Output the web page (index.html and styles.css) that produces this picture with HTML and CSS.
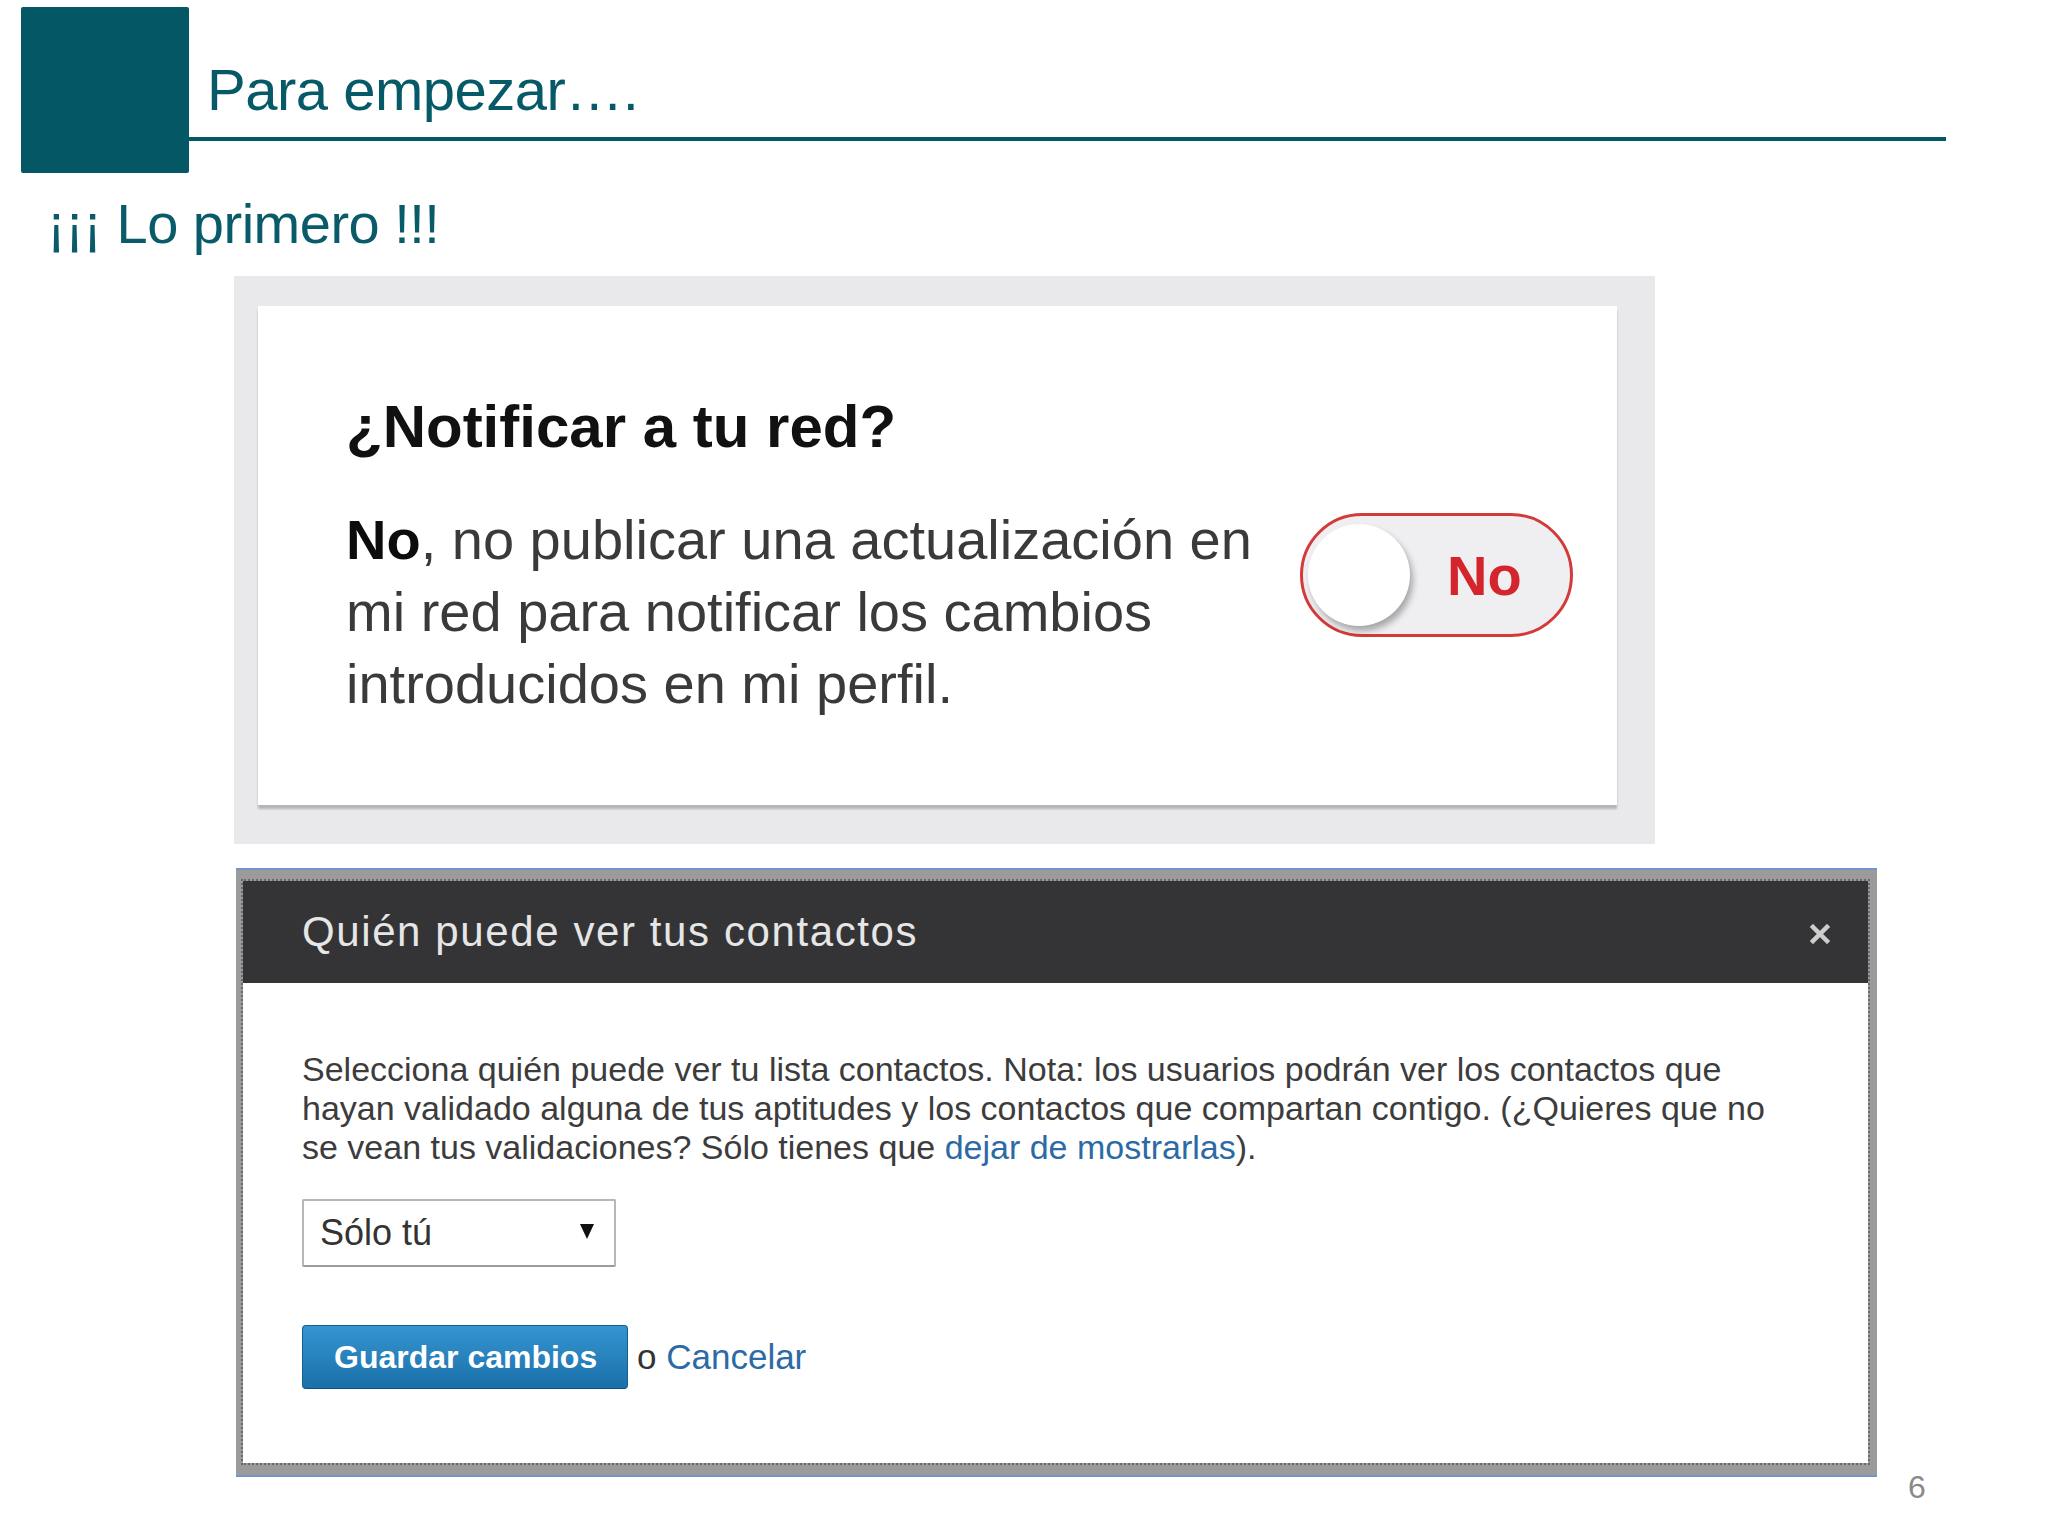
FILE: index.html
```html
<!DOCTYPE html>
<html lang="es">
<head>
    <meta charset="UTF-8">
    <meta name="viewport" content="width=device-width, initial-scale=1.0">
    <title>Para empezar</title>
    <link rel="stylesheet" href="styles.css">
</head>
<body>
    <div class="slide">
        <header class="slide-head">
            <div class="head-square"></div>
            <h1 class="head-title">Para empezar….</h1>
        </header>

        <h2 class="subtitle">¡¡¡ Lo primero !!!</h2>

        <!-- captura 1: notificar a tu red -->
        <div class="shot">
            <div class="notify-card">
                <h3 class="notify-title">¿Notificar a tu red?</h3>
                <div class="notify-row">
                    <p class="notify-text"><strong>No</strong>, no publicar una actualización en mi red para notificar los cambios introducidos en mi perfil.</p>
                    <div class="toggle">
                        <span class="toggle-knob"></span>
                        <span class="toggle-label">No</span>
                    </div>
                </div>
            </div>
        </div>

        <!-- captura 2: quién puede ver tus contactos -->
        <div class="dialog-row">
            <div class="dialog-frame">
                <div class="dialog">
                    <div class="dialog-head">
                        <span class="dialog-title">Quién puede ver tus contactos</span>
                        <svg class="dialog-close" width="20" height="20" viewBox="0 0 20 20">
                            <path d="M3 3 L17 17 M17 3 L3 17" stroke="#cdcdcd" stroke-width="4.5" stroke-linecap="square"/>
                        </svg>
                    </div>
                    <div class="dialog-body">
                        <p class="dialog-text">Selecciona quién puede ver tu lista contactos. Nota: los usuarios podrán ver los contactos que hayan validado alguna de tus aptitudes y los contactos que compartan contigo. (¿Quieres que no se vean tus validaciones? Sólo tienes que <a href="#" class="link">dejar de mostrarlas</a>).</p>
                        <div class="select">
                            <span>Sólo tú</span>
                            <span class="select-arrow"></span>
                        </div>
                        <div class="actions">
                            <button class="btn-primary">Guardar cambios</button>
                            <span class="actions-alt">o <a href="#" class="link">Cancelar</a></span>
                        </div>
                    </div>
                </div>
            </div>
            <span class="page-num">6</span>
        </div>
    </div>
</body>
</html>
```

FILE: styles.css
```css
body, html {
    margin: 0;
    padding: 0;
    background: #fff;
    font-family: "Liberation Sans", Arial, sans-serif;
}

.slide {
    width: 2048px;
    height: 1536px;
    padding: 7px 0 0 21px;
    box-sizing: border-box;
    overflow: hidden;
}

/* cabecera */
.slide-head {
    display: flex;
    align-items: flex-start;
}

.head-square {
    width: 168px;
    height: 166px;
    background: #045866;
    border-radius: 2px;
}

.head-title {
    width: 1739px;
    height: 76px;
    margin: 0;
    padding: 54px 0 0 18px;
    border-bottom: 4px solid #045866;
    font-size: 58px;
    line-height: 58px;
    font-weight: normal;
    color: #065a68;
    letter-spacing: -0.5px;
}

.subtitle {
    margin: 22px 0 0 26px;
    font-size: 56px;
    line-height: 57px;
    font-weight: normal;
    letter-spacing: -0.5px;
    color: #0a5b69;
}

/* captura notificar */
.shot {
    width: 1421px;
    margin: 24px 0 0 213px;
    padding: 30px 38px 39px 24px;
    box-sizing: border-box;
    background: #e9e8eb;
}

.notify-card {
    background: #fff;
    padding: 91px 0 85px 88px;
    box-shadow: 0 4px 2px rgba(0, 0, 0, 0.22);
}

.notify-title {
    margin: 0;
    font-size: 60px;
    line-height: 60px;
    font-weight: bold;
    color: #111;
}

.notify-row {
    display: flex;
    align-items: flex-start;
    margin-top: 47px;
}

.notify-text {
    width: 930px;
    margin: 0;
    font-size: 56px;
    line-height: 72px;
    color: #3a3a3a;
}

.notify-text strong {
    color: #0c0c0c;
}

.toggle {
    display: flex;
    align-items: center;
    width: 273px;
    height: 124px;
    margin: 9px 0 0 24px;
    padding-left: 5px;
    box-sizing: border-box;
    border: 3px solid #d33b3b;
    border-radius: 62px;
    background: #efeff1;
}

.toggle-knob {
    width: 102px;
    height: 102px;
    border-radius: 50%;
    background: #fff;
    box-shadow: 3px 5px 6px rgba(0, 0, 0, 0.3);
}

.toggle-label {
    margin-left: 37px;
    font-size: 56px;
    font-weight: bold;
    color: #d4242c;
}

/* captura contactos */
.dialog-row {
    display: flex;
    align-items: flex-end;
    margin: 24px 0 0 215px;
}

.dialog-frame {
    width: 1641px;
    padding: 11px 9px 12px 7px;
    box-sizing: border-box;
    background: #9b9b9b;
    border-top: 2px solid #7393cf;
    border-bottom: 2px solid #7393cf;
}

.dialog {
    outline: 2px dotted #6a6a6a;
}

.dialog-head {
    display: flex;
    align-items: center;
    justify-content: space-between;
    height: 102px;
    padding: 0 38px 0 59px;
    background: #343436;
}

.dialog-title {
    font-size: 42px;
    letter-spacing: 1.6px;
    color: #e6e6e6;
    margin-top: 0;
}

.dialog-close {
    margin-top: 4px;
}

.dialog-body {
    padding: 67px 66px 74px 59px;
    background: #fff;
}

.dialog-text {
    width: 1496px;
    margin: 0;
    font-size: 34px;
    line-height: 39px;
    color: #3c3c3c;
}

.link {
    color: #2c6aa6;
    text-decoration: none;
}

.select {
    display: flex;
    align-items: center;
    justify-content: space-between;
    width: 314px;
    height: 68px;
    margin-top: 32px;
    padding: 0 20px 0 16px;
    box-sizing: border-box;
    border: 2px solid #b7b7b7;
    border-bottom-color: #9c9c9c;
    border-radius: 2px;
    font-size: 36px;
    color: #333;
}

.select-arrow {
    width: 0;
    height: 0;
    margin-top: -4px;
    border-left: 7px solid transparent;
    border-right: 7px solid transparent;
    border-top: 15px solid #111;
}

.actions {
    display: flex;
    align-items: center;
    margin-top: 58px;
}

.btn-primary {
    width: 326px;
    height: 64px;
    padding: 0 0 0 31px;
    text-align: left;
    border: 1px solid #12608f;
    border-bottom-color: #0b4f7a;
    border-radius: 4px;
    background: linear-gradient(to bottom, #3594d1, #1a70a9);
    font-family: "Liberation Sans", Arial, sans-serif;
    font-size: 32px;
    font-weight: bold;
    color: #fff;
}

.actions-alt {
    margin-left: 9px;
    font-size: 35px;
    color: #333;
}

.page-num {
    margin: 0 0 -26px 31px;
    font-size: 32px;
    line-height: 32px;
    color: #8a8a8a;
}
```
